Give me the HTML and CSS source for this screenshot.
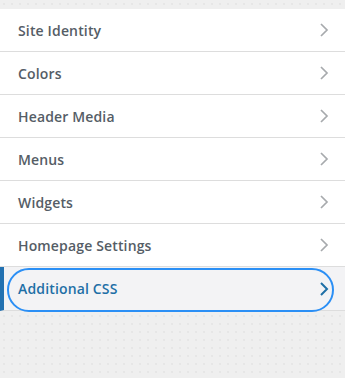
FILE: index.html
```html
<!DOCTYPE html>
<html>
<head>
<meta charset="utf-8">
<link rel="stylesheet" href="styles.css">
</head>
<body>
<div class="panel">
  <div class="top"></div>
  <ul class="menu">
    <li class="item"><span class="label">Site Identity</span><svg class="chev" viewBox="0 0 10 16" width="10" height="16"><path d="M2 2 L8 8 L2 14" fill="none" stroke="currentColor" stroke-width="1.7"/></svg></li>
    <li class="item"><span class="label">Colors</span><svg class="chev" viewBox="0 0 10 16" width="10" height="16"><path d="M2 2 L8 8 L2 14" fill="none" stroke="currentColor" stroke-width="1.7"/></svg></li>
    <li class="item"><span class="label">Header Media</span><svg class="chev" viewBox="0 0 10 16" width="10" height="16"><path d="M2 2 L8 8 L2 14" fill="none" stroke="currentColor" stroke-width="1.7"/></svg></li>
    <li class="item"><span class="label">Menus</span><svg class="chev" viewBox="0 0 10 16" width="10" height="16"><path d="M2 2 L8 8 L2 14" fill="none" stroke="currentColor" stroke-width="1.7"/></svg></li>
    <li class="item"><span class="label">Widgets</span><svg class="chev" viewBox="0 0 10 16" width="10" height="16"><path d="M2 2 L8 8 L2 14" fill="none" stroke="currentColor" stroke-width="1.7"/></svg></li>
    <li class="item"><span class="label">Homepage Settings</span><svg class="chev" viewBox="0 0 10 16" width="10" height="16"><path d="M2 2 L8 8 L2 14" fill="none" stroke="currentColor" stroke-width="1.7"/></svg></li>
    <li class="item active"><span class="label">Additional CSS</span><svg class="chev" viewBox="0 0 10 16" width="10" height="16"><path d="M2 2 L8 8 L2 14" fill="none" stroke="currentColor" stroke-width="2"/></svg><span class="ring"></span></li>
  </ul>
</div>
</body>
</html>
```
FILE: styles.css
```css
html, body {
  margin: 0;
  padding: 0;
}
body {
  width: 345px;
  height: 378px;
  background-color: #efefef;
  background-image: radial-gradient(circle, #e2e2e2 0.6px, transparent 0.9px);
  background-size: 8px 8px;
  font-family: "Open Sans", "Liberation Sans", sans-serif;
  overflow: hidden;
}
.top {
  height: 9px;
}
.menu {
  list-style: none;
  margin: 0;
  padding: 0;
}
.item {
  position: relative;
  display: flex;
  align-items: center;
  justify-content: space-between;
  height: 42px;
  padding: 0 16px 0 18px;
  background: #ffffff;
  border-bottom: 1px solid #dddddd;
  color: #555d66;
  font-size: 14px;
  font-weight: 600;
}
.label {
  letter-spacing: 0.15px;
}
.chev {
  color: #a7aaad;
  display: block;
}
.item.active {
  background: #f3f3f5;
  color: #1e6fa6;
  border-left: 4px solid #2271b1;
  padding-left: 14px;
  height: 43px;
}
.item.active .chev {
  color: #1e6fa6;
}
.ring {
  position: absolute;
  left: 3px;
  right: 11px;
  top: 1px;
  bottom: -2px;
  border: 2.5px solid #2b8ff5;
  border-radius: 22px;
}
```
